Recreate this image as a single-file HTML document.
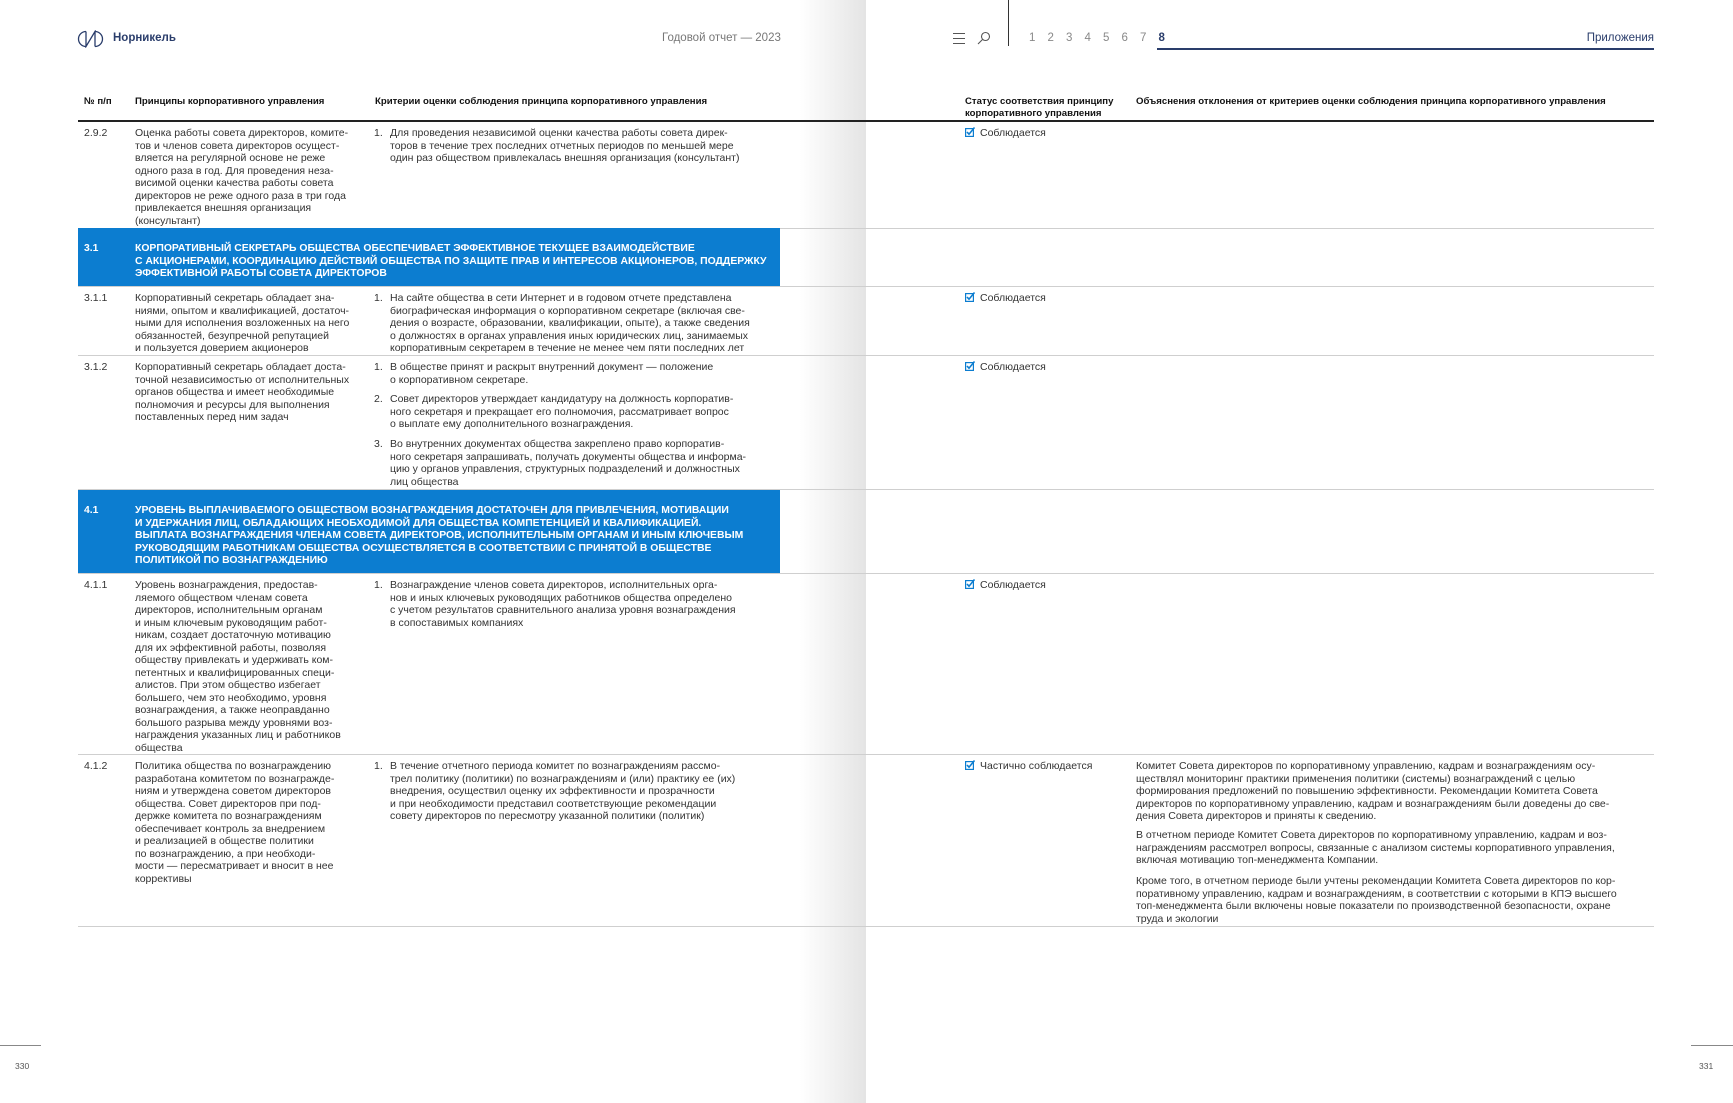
<!DOCTYPE html>
<html><head><meta charset="utf-8"><style>
*{margin:0;padding:0;box-sizing:border-box}
body{width:1733px;height:1103px;position:relative;overflow:hidden;background:#fff;font-family:"Liberation Sans",sans-serif;color:#2b2b2b}
.a{position:absolute;white-space:nowrap}
.t{font-size:10.5px;line-height:12.5px;color:#333}
.h{font-size:9.6px;line-height:12px;font-weight:bold;color:#111}
.band{position:absolute;left:78px;width:702px;background:#0c7dd0}
.band .a{color:#fff;font-weight:bold;font-size:10.4px;line-height:12.5px}
.sep{position:absolute;left:78px;width:1576px;height:1px;background:#cfcfcf}
.chk{display:inline-block;width:10px;height:10px;vertical-align:-1px;margin-right:5px}
</style></head><body>
<div style="position:absolute;left:800px;top:0;width:66px;height:1103px;background:linear-gradient(90deg,#fff,#e4e4e4)"></div>

<svg class="a" style="left:77px;top:30px" width="27" height="18" viewBox="0 0 27 18"><g fill="none" stroke="#2a3d6b" stroke-width="1.3"><path d="M9 1.5A7.5 7.5 0 0 0 9 16.5M18 1.5A7.5 7.5 0 0 1 18 16.5"/><path d="M9 1.5V16.5L18 1.5V16.5"/></g></svg>
<div class="a" style="left:113px;top:32px;font-size:11.5px;font-weight:bold;color:#2a3d6b">Норникель</div>
<div class="a" style="left:662px;top:32px;font-size:11.5px;color:#777">Годовой отчет — 2023</div>

<svg class="a" style="left:953px;top:32px" width="12" height="13"><g stroke="#555" stroke-width="1"><line x1="0" y1="1.5" x2="12" y2="1.5"/><line x1="0" y1="6.5" x2="12" y2="6.5"/><line x1="0" y1="11.5" x2="12" y2="11.5"/></g></svg>
<svg class="a" style="left:977px;top:31px" width="14" height="14"><g fill="none" stroke="#555" stroke-width="1.1"><circle cx="8.5" cy="5.5" r="4"/><line x1="5.5" y1="8.5" x2="1" y2="13"/></g></svg>
<div style="position:absolute;left:1008px;top:0;width:1px;height:46px;background:#333"></div>
<div class="a" style="left:1029px;top:32px;font-size:11.5px;color:#888;word-spacing:8.9px">1 2 3 4 5 6 7 <b style="color:#2a3d6b">8</b></div>
<div style="position:absolute;left:1157px;top:48px;width:497px;height:2px;background:#2a3d6b"></div>
<div class="a" style="right:79px;top:32px;font-size:11.5px;color:#2a3d6b">Приложения</div>

<div class="a h" style="left:84px;top:96px">№ п/п</div>
<div class="a h" style="left:135px;top:96px">Принципы корпоративного управления</div>
<div class="a h" style="left:375px;top:96px">Критерии оценки соблюдения принципа корпоративного управления</div>
<div class="a h" style="left:965px;top:96px">Статус соответствия принципу<br>корпоративного управления</div>
<div class="a h" style="left:1136px;top:96px">Объяснения отклонения от критериев оценки соблюдения принципа корпоративного управления</div>
<div style="position:absolute;left:78px;top:120px;width:1576px;height:2px;background:#222"></div>

<div class="a t" style="left:84px;top:127px">2.9.2</div>
<div class="a t" style="left:135px;top:127px">Оценка работы совета директоров, комите-<br>тов и членов совета директоров осущест-<br>вляется на регулярной основе не реже<br>одного раза в год. Для проведения неза-<br>висимой оценки качества работы совета<br>директоров не реже одного раза в три года<br>привлекается внешняя организация<br>(консультант)</div>
<div class="a t" style="left:374px;top:127px">1.</div>
<div class="a t" style="left:390px;top:127px">Для проведения независимой оценки качества работы совета дирек-<br>торов в течение трех последних отчетных периодов по меньшей мере<br>один раз обществом привлекалась внешняя организация (консультант)</div>
<div class="a t" style="left:965px;top:127px"><svg class="chk" viewBox="0 0 10 10"><rect x="0.6" y="1.6" width="7.8" height="7.8" fill="none" stroke="#0c7dd0" stroke-width="1.2"/><path d="M2 5l2 2.2L9.5 0.5" fill="none" stroke="#0c7dd0" stroke-width="1.6"/></svg>Соблюдается</div>

<div class="sep" style="top:228px"></div>
<div class="band" style="top:228px;height:58px">
<div class="a" style="left:6px;top:15px">3.1</div>
<div class="a" style="left:57px;top:15px">КОРПОРАТИВНЫЙ СЕКРЕТАРЬ ОБЩЕСТВА ОБЕСПЕЧИВАЕТ ЭФФЕКТИВНОЕ ТЕКУЩЕЕ ВЗАИМОДЕЙСТВИЕ<br>С АКЦИОНЕРАМИ, КООРДИНАЦИЮ ДЕЙСТВИЙ ОБЩЕСТВА ПО ЗАЩИТЕ ПРАВ И ИНТЕРЕСОВ АКЦИОНЕРОВ, ПОДДЕРЖКУ<br>ЭФФЕКТИВНОЙ РАБОТЫ СОВЕТА ДИРЕКТОРОВ</div>
</div>
<div class="sep" style="top:286px"></div>

<div class="a t" style="left:84px;top:292px">3.1.1</div>
<div class="a t" style="left:135px;top:292px">Корпоративный секретарь обладает зна-<br>ниями, опытом и квалификацией, достаточ-<br>ными для исполнения возложенных на него<br>обязанностей, безупречной репутацией<br>и пользуется доверием акционеров</div>
<div class="a t" style="left:374px;top:292px">1.</div>
<div class="a t" style="left:390px;top:292px">На сайте общества в сети Интернет и в годовом отчете представлена<br>биографическая информация о корпоративном секретаре (включая све-<br>дения о возрасте, образовании, квалификации, опыте), а также сведения<br>о должностях в органах управления иных юридических лиц, занимаемых<br>корпоративным секретарем в течение не менее чем пяти последних лет</div>
<div class="a t" style="left:965px;top:292px"><svg class="chk" viewBox="0 0 10 10"><rect x="0.6" y="1.6" width="7.8" height="7.8" fill="none" stroke="#0c7dd0" stroke-width="1.2"/><path d="M2 5l2 2.2L9.5 0.5" fill="none" stroke="#0c7dd0" stroke-width="1.6"/></svg>Соблюдается</div>
<div class="sep" style="top:355px"></div>

<div class="a t" style="left:84px;top:361px">3.1.2</div>
<div class="a t" style="left:135px;top:361px">Корпоративный секретарь обладает доста-<br>точной независимостью от исполнительных<br>органов общества и имеет необходимые<br>полномочия и ресурсы для выполнения<br>поставленных перед ним задач</div>
<div class="a t" style="left:374px;top:361px">1.</div>
<div class="a t" style="left:390px;top:361px">В обществе принят и раскрыт внутренний документ — положение<br>о корпоративном секретаре.</div>
<div class="a t" style="left:374px;top:393px">2.</div>
<div class="a t" style="left:390px;top:393px">Совет директоров утверждает кандидатуру на должность корпоратив-<br>ного секретаря и прекращает его полномочия, рассматривает вопрос<br>о выплате ему дополнительного вознаграждения.</div>
<div class="a t" style="left:374px;top:438px">3.</div>
<div class="a t" style="left:390px;top:438px">Во внутренних документах общества закреплено право корпоратив-<br>ного секретаря запрашивать, получать документы общества и информа-<br>цию у органов управления, структурных подразделений и должностных<br>лиц общества</div>
<div class="a t" style="left:965px;top:361px"><svg class="chk" viewBox="0 0 10 10"><rect x="0.6" y="1.6" width="7.8" height="7.8" fill="none" stroke="#0c7dd0" stroke-width="1.2"/><path d="M2 5l2 2.2L9.5 0.5" fill="none" stroke="#0c7dd0" stroke-width="1.6"/></svg>Соблюдается</div>

<div class="sep" style="top:489px"></div>
<div class="band" style="top:490px;height:83px">
<div class="a" style="left:6px;top:15px">4.1</div>
<div class="a" style="left:57px;top:15px">УРОВЕНЬ ВЫПЛАЧИВАЕМОГО ОБЩЕСТВОМ ВОЗНАГРАЖДЕНИЯ ДОСТАТОЧЕН ДЛЯ ПРИВЛЕЧЕНИЯ, МОТИВАЦИИ<br>И УДЕРЖАНИЯ ЛИЦ, ОБЛАДАЮЩИХ НЕОБХОДИМОЙ ДЛЯ ОБЩЕСТВА КОМПЕТЕНЦИЕЙ И КВАЛИФИКАЦИЕЙ.<br>ВЫПЛАТА ВОЗНАГРАЖДЕНИЯ ЧЛЕНАМ СОВЕТА ДИРЕКТОРОВ, ИСПОЛНИТЕЛЬНЫМ ОРГАНАМ И ИНЫМ КЛЮЧЕВЫМ<br>РУКОВОДЯЩИМ РАБОТНИКАМ ОБЩЕСТВА ОСУЩЕСТВЛЯЕТСЯ В СООТВЕТСТВИИ С ПРИНЯТОЙ В ОБЩЕСТВЕ<br>ПОЛИТИКОЙ ПО ВОЗНАГРАЖДЕНИЮ</div>
</div>
<div class="sep" style="top:573px"></div>

<div class="a t" style="left:84px;top:579px">4.1.1</div>
<div class="a t" style="left:135px;top:579px">Уровень вознаграждения, предостав-<br>ляемого обществом членам совета<br>директоров, исполнительным органам<br>и иным ключевым руководящим работ-<br>никам, создает достаточную мотивацию<br>для их эффективной работы, позволяя<br>обществу привлекать и удерживать ком-<br>петентных и квалифицированных специ-<br>алистов. При этом общество избегает<br>большего, чем это необходимо, уровня<br>вознаграждения, а также неоправданно<br>большого разрыва между уровнями воз-<br>награждения указанных лиц и работников<br>общества</div>
<div class="a t" style="left:374px;top:579px">1.</div>
<div class="a t" style="left:390px;top:579px">Вознаграждение членов совета директоров, исполнительных орга-<br>нов и иных ключевых руководящих работников общества определено<br>с учетом результатов сравнительного анализа уровня вознаграждения<br>в сопоставимых компаниях</div>
<div class="a t" style="left:965px;top:579px"><svg class="chk" viewBox="0 0 10 10"><rect x="0.6" y="1.6" width="7.8" height="7.8" fill="none" stroke="#0c7dd0" stroke-width="1.2"/><path d="M2 5l2 2.2L9.5 0.5" fill="none" stroke="#0c7dd0" stroke-width="1.6"/></svg>Соблюдается</div>
<div class="sep" style="top:754px"></div>

<div class="a t" style="left:84px;top:760px">4.1.2</div>
<div class="a t" style="left:135px;top:760px">Политика общества по вознаграждению<br>разработана комитетом по вознагражде-<br>ниям и утверждена советом директоров<br>общества. Совет директоров при под-<br>держке комитета по вознаграждениям<br>обеспечивает контроль за внедрением<br>и реализацией в обществе политики<br>по вознаграждению, а при необходи-<br>мости — пересматривает и вносит в нее<br>коррективы</div>
<div class="a t" style="left:374px;top:760px">1.</div>
<div class="a t" style="left:390px;top:760px">В течение отчетного периода комитет по вознаграждениям рассмо-<br>трел политику (политики) по вознаграждениям и (или) практику ее (их)<br>внедрения, осуществил оценку их эффективности и прозрачности<br>и при необходимости представил соответствующие рекомендации<br>совету директоров по пересмотру указанной политики (политик)</div>
<div class="a t" style="left:965px;top:760px"><svg class="chk" viewBox="0 0 10 10"><rect x="0.6" y="1.6" width="7.8" height="7.8" fill="none" stroke="#0c7dd0" stroke-width="1.2"/><path d="M2 5l2 2.2L9.5 0.5" fill="none" stroke="#0c7dd0" stroke-width="1.6"/></svg>Частично соблюдается</div>
<div class="a t" style="left:1136px;top:760px">Комитет Совета директоров по корпоративному управлению, кадрам и вознаграждениям осу-<br>ществлял мониторинг практики применения политики (системы) вознаграждений с целью<br>формирования предложений по повышению эффективности. Рекомендации Комитета Совета<br>директоров по корпоративному управлению, кадрам и вознаграждениям были доведены до све-<br>дения Совета директоров и приняты к сведению.</div>
<div class="a t" style="left:1136px;top:829px">В отчетном периоде Комитет Совета директоров по корпоративному управлению, кадрам и воз-<br>награждениям рассмотрел вопросы, связанные с анализом системы корпоративного управления,<br>включая мотивацию топ-менеджмента Компании.</div>
<div class="a t" style="left:1136px;top:875px">Кроме того, в отчетном периоде были учтены рекомендации Комитета Совета директоров по кор-<br>поративному управлению, кадрам и вознаграждениям, в соответствии с которыми в КПЭ высшего<br>топ-менеджмента были включены новые показатели по производственной безопасности, охране<br>труда и экологии</div>
<div class="sep" style="top:926px"></div>

<div style="position:absolute;left:0;top:1045px;width:41px;height:1px;background:#888"></div>
<div class="a" style="left:15px;top:1061px;font-size:8.5px;color:#555">330</div>
<div style="position:absolute;left:1691px;top:1045px;width:42px;height:1px;background:#888"></div>
<div class="a" style="left:1699px;top:1061px;font-size:8.5px;color:#555">331</div>
</body></html>
